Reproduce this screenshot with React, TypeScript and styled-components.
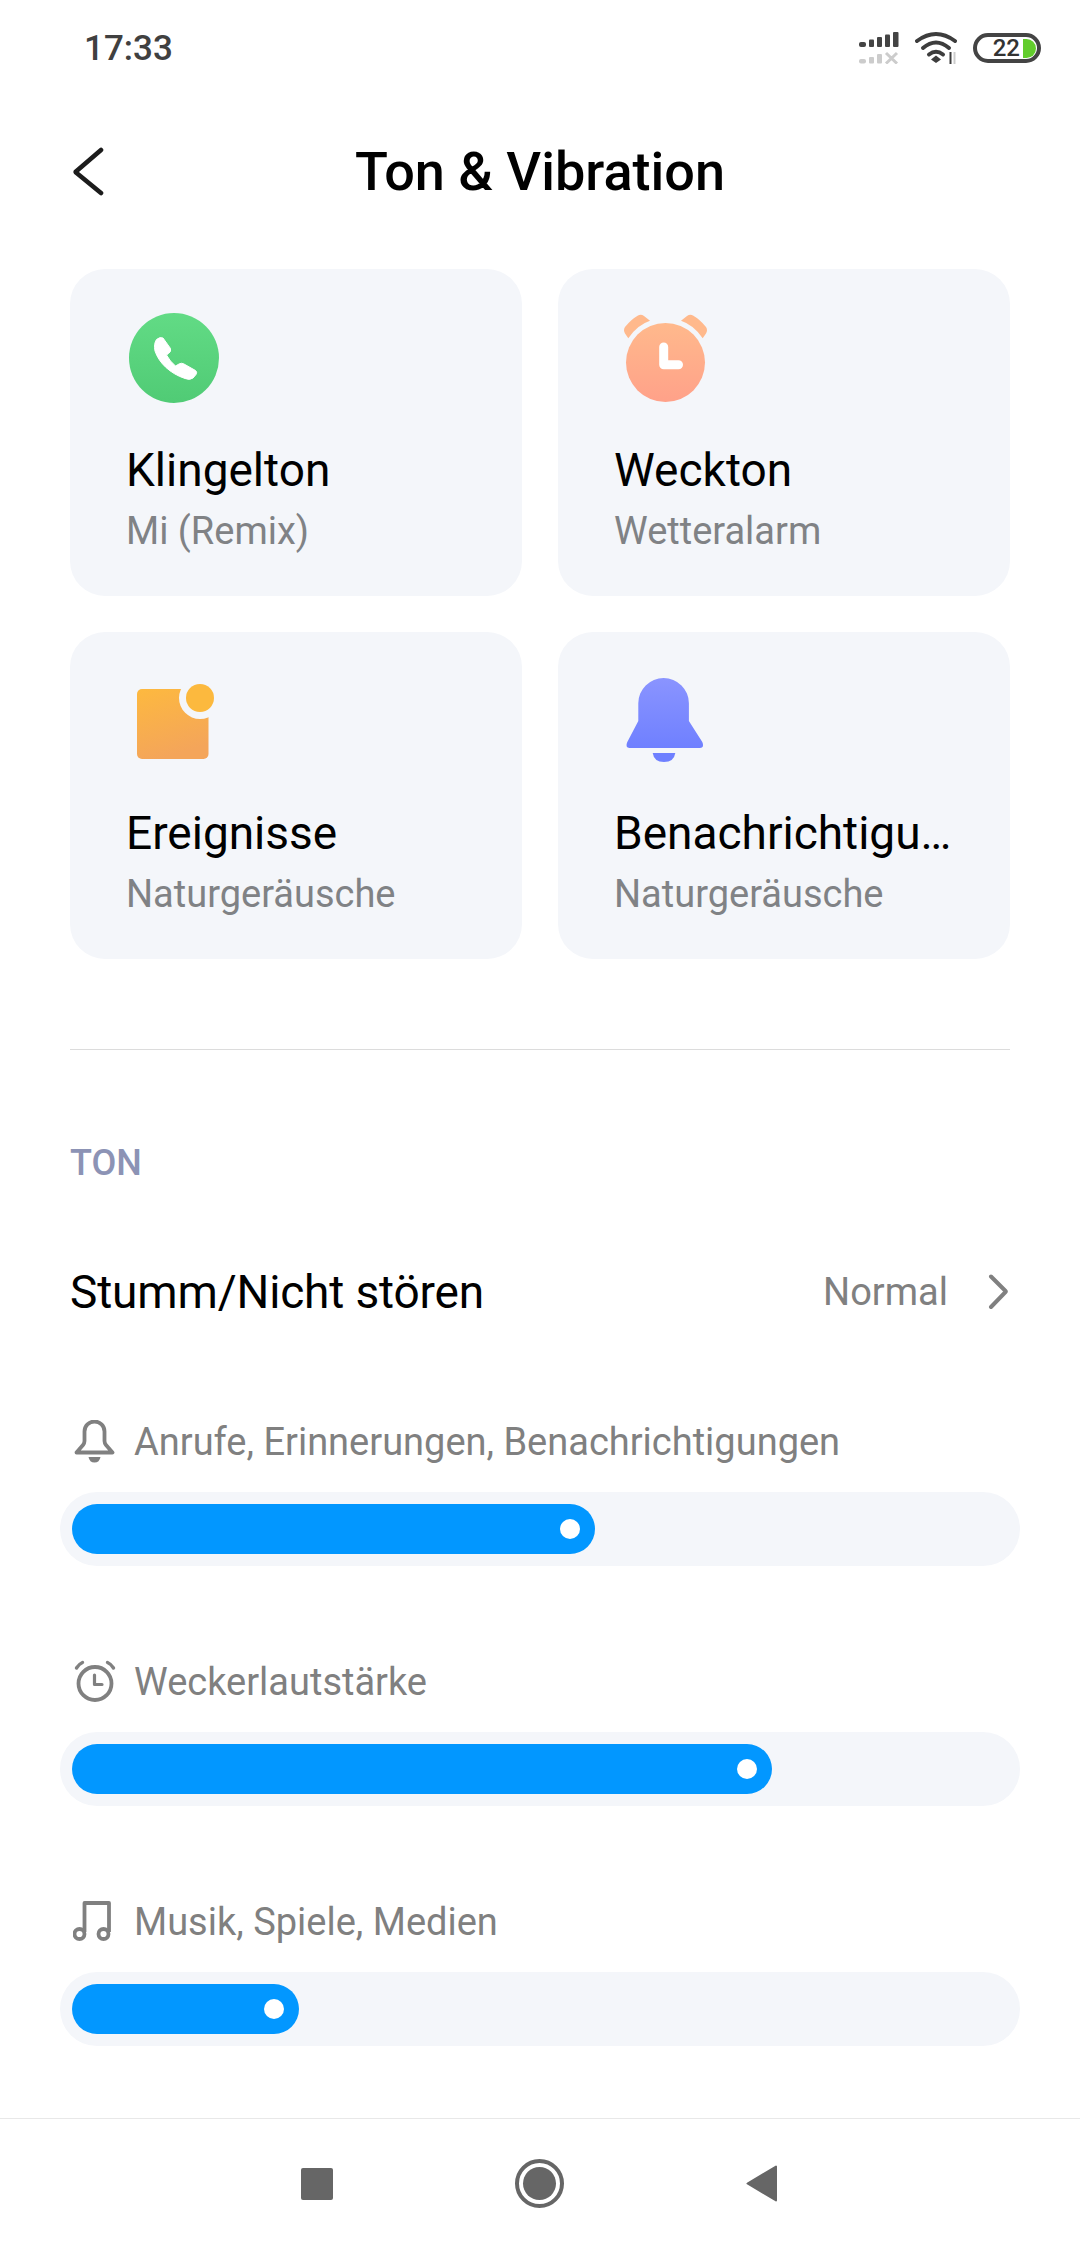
import React from "react"
import styled, { createGlobalStyle } from "styled-components"

const GlobalStyle = createGlobalStyle`
   html, body {
      margin: 0;
      padding: 0;
      background: #fff;
   }
   body {
      font-family: Roboto, "Liberation Sans", sans-serif;
   }
`

const sliders = [
   { label: "Anrufe, Erinnerungen, Benachrichtigungen", icon: "bell", fill: 523 },
   { label: "Weckerlautstärke", icon: "alarm", fill: 700 },
   { label: "Musik, Spiele, Medien", icon: "music", fill: 227 },
]

function PhoneIcon() {
   return (
      <svg width="90" height="90" viewBox="0 0 90 90">
         <defs>
            <linearGradient id="phoneFill" x1="0" y1="0" x2="0" y2="1">
               <stop offset="0" stopColor="#62db85" />
               <stop offset="1" stopColor="#50cb75" />
            </linearGradient>
         </defs>
         <circle cx="45" cy="45" r="45" fill="url(#phoneFill)" />
         <path fill="#fff" stroke="#fff" strokeWidth="1" strokeLinejoin="round" d="M27.5 26.5 Q31 23.5 34 25 L41.5 35.5 Q42.5 38.5 39.5 40.5 L37.5 42 Q41 48.5 46.5 53 L50 51 Q52.5 49.5 55 51 L66.5 57.5 Q68.5 59 67 61.5 L64 65 Q61 67.5 56 65.5 C41 60.5 30 50 26 38 Q24.5 31 27.5 26.5 Z" />
      </svg>
   )
}

function AlarmIcon() {
   return (
      <svg width="92" height="90" viewBox="0 0 92 90">
         <defs>
            <linearGradient id="alarmFill" x1="0" y1="0" x2="0" y2="1">
               <stop offset="0" stopColor="#ffb98c" />
               <stop offset="1" stopColor="#ffa189" />
            </linearGradient>
         </defs>
         <path fill="#ffb98c" d="M33 7.7 Q20 12 11.3 25.3 L8 20.5 Q6 17 8 14 Q14 6.5 21 2.5 Q24 1 27 3 Z" />
         <path fill="#ffb98c" d="M64 7.7 Q77 12 85.7 25.3 L89 20.5 Q91 17 89 14 Q83 6.5 76 2.5 Q73 1 70 3 Z" />
         <circle cx="48.5" cy="49.5" r="39.5" fill="url(#alarmFill)" />
         <path fill="none" stroke="#fff" strokeWidth="9" strokeLinecap="round" strokeLinejoin="round" d="M46.7 34 V51.7 H61.5" />
      </svg>
   )
}

function EventIcon() {
   return (
      <svg width="90" height="90" viewBox="0 0 90 90">
         <defs>
            <linearGradient id="eventFill" x1="0" y1="0" x2="0.3" y2="1">
               <stop offset="0" stopColor="#fdb93f" />
               <stop offset="1" stopColor="#f4a55a" />
            </linearGradient>
         </defs>
         <rect x="8" y="13" width="71.5" height="70" rx="5" fill="url(#eventFill)" />
         <circle cx="71" cy="22" r="21" fill="#f4f6fa" />
         <circle cx="71" cy="22" r="14" fill="#fcb93e" />
      </svg>
   )
}

function BellFilledIcon() {
   return (
      <svg width="90" height="90" viewBox="0 0 90 90">
         <defs>
            <linearGradient id="bellFill" x1="0" y1="0" x2="0" y2="1">
               <stop offset="0" stopColor="#8a94ff" />
               <stop offset="1" stopColor="#6f80ff" />
            </linearGradient>
         </defs>
         <path fill="url(#bellFill)" d="M21.3 27.3 a25.3 25.3 0 0 1 50.6 0 V45 L85.3 66 Q87.8 71.5 83 72 H12.5 Q7.8 71.5 10.3 66 L21.3 45 Z" />
         <path fill="#6f80ff" d="M35.7 77 H58.3 Q57 86 47 86 Q37 86 35.7 77 Z" />
      </svg>
   )
}

function SmallIcon({ name }: { name: string }) {
   if (name === "bell") {
      return (
         <svg width="44" height="44" viewBox="0 0 44 44" fill="none" stroke="#808080" strokeWidth="3.8">
            <path strokeLinejoin="round" d="M11.5 11.5 a10 10 0 0 1 20 0 V21 Q31.5 23 33 25 L39.5 32.5 H3.5 L10 25 Q11.5 23 11.5 21 Z" />
            <path fill="#808080" stroke="none" d="M15.5 37 H27.5 Q26.5 42.5 21.5 42.5 Q16.5 42.5 15.5 37 Z" />
         </svg>
      )
   }
   if (name === "alarm") {
      return (
         <svg width="44" height="44" viewBox="0 0 44 44" fill="none" stroke="#808080" strokeWidth="3.8">
            <circle cx="22" cy="23.5" r="16.5" />
            <path strokeLinecap="round" strokeLinejoin="round" d="M21.5 15 V24.5 H29" strokeWidth="3.2" />
            <path strokeLinecap="round" d="M3.5 8 Q6 4 9.5 2.5 M40.5 8 Q38 4 34.5 2.5" strokeWidth="3.4" />
         </svg>
      )
   }
   return (
      <svg width="44" height="44" viewBox="0 0 44 44" fill="none" stroke="#808080" strokeWidth="3.8">
         <path strokeLinejoin="round" d="M11.5 32 V3 H36 V32" />
         <circle cx="6.5" cy="34" r="5" />
         <circle cx="30.5" cy="34" r="5" />
      </svg>
   )
}

export default function App() {
   return (
      <Page>
         <GlobalStyle />
         <StatusBar>
            <Clock>17:33</Clock>
            <StatusIcons>
               <svg width="40" height="32" viewBox="0 0 40 32">
                  <g fill="#444">
                     <rect x="0" y="10" width="7" height="5" rx="2" />
                     <rect x="10" y="7.5" width="5" height="7.5" rx="1" />
                     <rect x="18" y="5" width="5" height="10" rx="1" />
                     <rect x="26" y="2.5" width="5" height="12.5" rx="1" />
                     <rect x="34" y="0" width="5.5" height="15" rx="1" />
                  </g>
                  <g fill="#ccc">
                     <rect x="0" y="27" width="7" height="4.5" rx="2" />
                     <rect x="10" y="25" width="5" height="6.5" rx="1" />
                     <rect x="18" y="22" width="5" height="9.5" rx="1" />
                  </g>
                  <path stroke="#ccc" strokeWidth="3" d="M27 21 L38 31.5 M38 21 L27 31.5" />
               </svg>
               <svg width="42" height="34" viewBox="0 0 42 34" fill="none">
                  <g stroke="#3d3d3d" strokeWidth="4" strokeLinecap="round">
                     <path d="M2 10 Q21 -4 40 10" />
                     <path d="M8 17 Q21 6 34 17" />
                     <path d="M14 23.5 Q21 18 28 23.5" />
                  </g>
                  <path fill="#3d3d3d" d="M21 24.5 L26 28.5 L21 32 L16 28.5 Z" />
                  <path stroke="#3d3d3d" strokeWidth="2" d="M35.5 21 V33" />
                  <path stroke="#ccc" strokeWidth="2" d="M39.5 21 V33" />
               </svg>
               <Battery>
                  <BatteryText>22</BatteryText>
                  <BatteryCharge />
               </Battery>
            </StatusIcons>
         </StatusBar>
         <Header>
            <BackButton>
               <svg width="32" height="50" viewBox="0 0 32 50" fill="none">
                  <path stroke="#1c1c1c" strokeWidth="4.6" strokeLinecap="round" strokeLinejoin="round" d="M29 3 L4 24.5 Q3.5 25 4 25.5 L29 46" />
               </svg>
            </BackButton>
            <Title>Ton &amp; Vibration</Title>
         </Header>
         <CardGrid>
            <Card>
               <CardIcon><PhoneIcon /></CardIcon>
               <CardTitle>Klingelton</CardTitle>
               <CardSub>Mi (Remix)</CardSub>
            </Card>
            <Card>
               <CardIcon><AlarmIcon /></CardIcon>
               <CardTitle>Weckton</CardTitle>
               <CardSub>Wetteralarm</CardSub>
            </Card>
            <Card>
               <CardIcon><EventIcon /></CardIcon>
               <CardTitle>Ereignisse</CardTitle>
               <CardSub>Naturgeräusche</CardSub>
            </Card>
            <Card>
               <CardIcon><BellFilledIcon /></CardIcon>
               <CardTitle>Benachrichtigu…</CardTitle>
               <CardSub>Naturgeräusche</CardSub>
            </Card>
         </CardGrid>
         <Divider />
         <SectionLabel>TON</SectionLabel>
         <ModeRow>
            <ModeTitle>Stumm/Nicht stören</ModeTitle>
            <ModeValue>
               <ModeText>Normal</ModeText>
               <svg width="20" height="36" viewBox="0 0 20 36" fill="none">
                  <path stroke="#808080" strokeWidth="4" strokeLinecap="round" strokeLinejoin="round" d="M3 2.5 L17.5 17 Q18 17.5 17.5 18 L3 33" />
               </svg>
            </ModeValue>
         </ModeRow>
         <SliderList>
            {sliders.map((s) => (
               <SliderItem key={s.icon}>
                  <SliderLabel>
                     <SmallIcon name={s.icon} />
                     <SliderText>{s.label}</SliderText>
                  </SliderLabel>
                  <Track>
                     <Fill style={{ width: s.fill }}>
                        <Knob />
                     </Fill>
                  </Track>
               </SliderItem>
            ))}
         </SliderList>
         <NavBar>
            <NavSquare />
            <NavHome>
               <NavHomeDot />
            </NavHome>
            <svg width="31" height="37" viewBox="0 0 31 37">
               <path fill="#666" stroke="#666" strokeWidth="2" strokeLinejoin="round" d="M30 1.5 V35.5 L1.5 18.5 Z" />
            </svg>
         </NavBar>
      </Page>
   )
}

const Page = styled.div`
   width: 1080px;
   height: 2248px;
   display: flex;
   flex-direction: column;
   background: #fff;
   overflow: hidden;
`

const StatusBar = styled.div`
   height: 96px;
   display: flex;
   justify-content: space-between;
   align-items: center;
   padding: 0 39px 0 84px;
   box-sizing: border-box;
`

const Clock = styled.span`
   font-size: 35px;
   font-weight: 500;
   color: #404040;
`

const StatusIcons = styled.div`
   display: flex;
   align-items: center;
   gap: 16px;
`

const Battery = styled.div`
   width: 68px;
   height: 30px;
   box-sizing: border-box;
   border: 4px solid #444;
   border-radius: 15px;
   display: flex;
   justify-content: flex-end;
   align-items: center;
   padding-right: 1px;
`

const BatteryText = styled.span`
   font-size: 24px;
   font-weight: 500;
   color: #333;
   line-height: 20px;
   margin-right: 3px;
`

const BatteryCharge = styled.div`
   width: 13px;
   height: 19px;
   background: #62cc2c;
   border-radius: 0 10px 10px 0;
`

const Header = styled.header`
   height: 152px;
   display: grid;
   grid-template-columns: 1fr auto 1fr;
   align-items: center;
   margin-bottom: 21px;
`

const BackButton = styled.div`
   padding-left: 72px;
   display: flex;
   align-items: center;
`

const Title = styled.h1`
   margin: 0;
   font-size: 54px;
   line-height: 60px;
   font-weight: 500;
   color: #000;
`

const CardGrid = styled.div`
   display: grid;
   grid-template-columns: 452px 452px;
   grid-auto-rows: 327px;
   gap: 36px;
   padding: 0 70px;
`

const Card = styled.div`
   background: #f4f6fa;
   border-radius: 35px;
   padding: 44px 58px 0 56px;
   box-sizing: border-box;
   min-width: 0;
`

const CardIcon = styled.div`
   width: 90px;
   height: 90px;
   margin: 0 0 40px 3px;
`

const CardTitle = styled.div`
   font-size: 46px;
   line-height: 54px;
   color: #000;
   white-space: nowrap;
   margin-bottom: 12px;
`

const CardSub = styled.div`
   font-size: 38px;
   line-height: 44px;
   color: #808285;
   white-space: nowrap;
`

const Divider = styled.div`
   height: 1px;
   background: #dcdcdc;
   margin: 90px 70px 92px;
`

const SectionLabel = styled.div`
   font-size: 36px;
   line-height: 42px;
   font-weight: 500;
   color: #8c93b5;
   padding-left: 70px;
   margin-bottom: 81px;
`

const ModeRow = styled.div`
   display: flex;
   justify-content: space-between;
   align-items: center;
   padding: 0 72px 0 70px;
   height: 54px;
   margin-bottom: 101px;
`

const ModeTitle = styled.div`
   font-size: 46px;
   line-height: 54px;
   color: #000;
   letter-spacing: -0.15px;
`

const ModeValue = styled.div`
   display: flex;
   align-items: center;
   gap: 40px;
`

const ModeText = styled.span`
   font-size: 38px;
   line-height: 44px;
   color: #808080;
`

const SliderList = styled.div`
   display: flex;
   flex-direction: column;
   gap: 94px;
`

const SliderItem = styled.div`
   display: flex;
   flex-direction: column;
   gap: 28px;
`

const SliderLabel = styled.div`
   display: flex;
   align-items: center;
   gap: 17px;
   padding-left: 73px;
   height: 44px;
`

const SliderText = styled.span`
   font-size: 38px;
   line-height: 44px;
   color: #808080;
`

const Track = styled.div`
   width: 960px;
   height: 74px;
   margin-left: 60px;
   box-sizing: border-box;
   padding: 12px;
   border-radius: 37px;
   background: #f4f6fa;
`

const Fill = styled.div`
   height: 50px;
   border-radius: 25px;
   background: #0297ff;
   display: flex;
   justify-content: flex-end;
   align-items: center;
   padding-right: 15px;
   box-sizing: border-box;
`

const Knob = styled.div`
   width: 20px;
   height: 20px;
   border-radius: 50%;
   background: #fff;
`

const NavBar = styled.nav`
   margin-top: auto;
   height: 130px;
   box-sizing: border-box;
   border-top: 1px solid #e8e8e8;
   display: flex;
   justify-content: center;
   align-items: center;
   gap: 182px;
   padding-right: 2px;
`

const NavSquare = styled.div`
   width: 32px;
   height: 32px;
   border-radius: 2px;
   background: #666;
`

const NavHome = styled.div`
   width: 49px;
   height: 49px;
   box-sizing: border-box;
   border: 4px solid #666;
   border-radius: 50%;
   display: flex;
   justify-content: center;
   align-items: center;
`

const NavHomeDot = styled.div`
   width: 33px;
   height: 33px;
   border-radius: 50%;
   background: #666;
`
